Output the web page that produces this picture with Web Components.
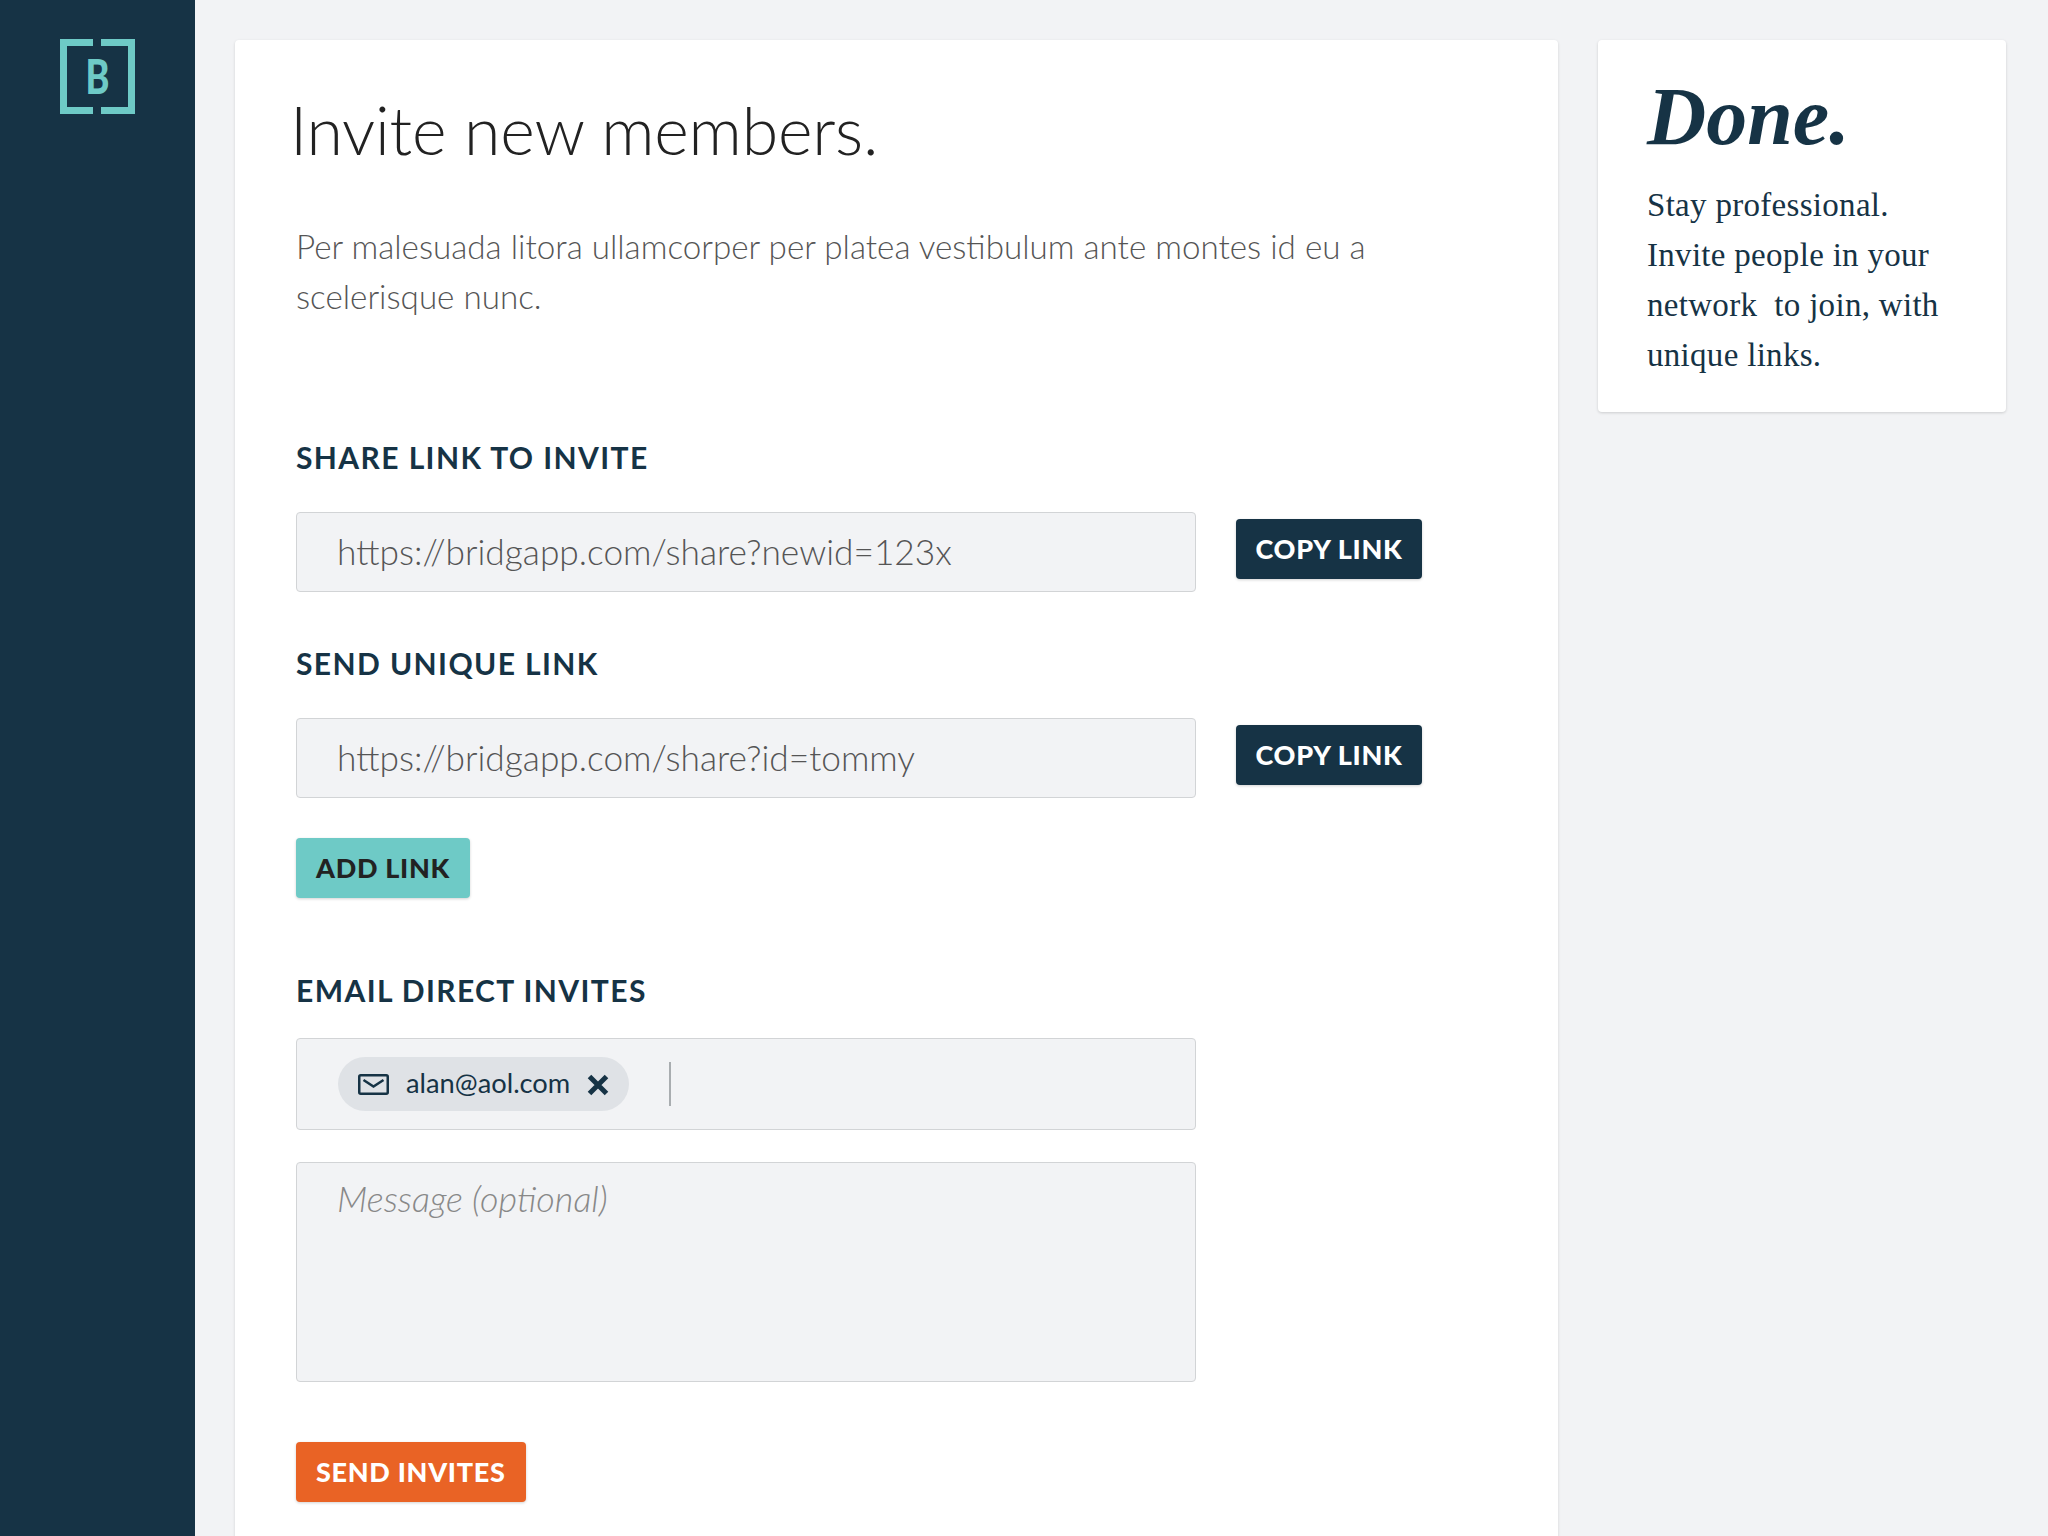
<!DOCTYPE html>
<html lang="en">
<head>
<meta charset="utf-8">
<title>Invite new members</title>
<style>
  html, body { margin: 0; height: 100%; }
  body { background: #f2f3f5; overflow: hidden; font-family: "Lato", sans-serif; }
</style>
</head>
<body>
<app-shell>
  <app-sidebar slot="nav"></app-sidebar>

  <main-card>
    <span slot="title">Invite new members.</span>
    <span slot="intro">Per malesuada litora ullamcorper per platea vestibulum ante montes id eu a scelerisque nunc.</span>

    <section-label style="--top: 0">SHARE LINK TO INVITE</section-label>
    <link-row value="https://bridgapp.com/share?newid=123x"></link-row>

    <section-label style="--top: 51px">SEND UNIQUE LINK</section-label>
    <link-row value="https://bridgapp.com/share?id=tommy"></link-row>
    <app-button kind="teal" style="margin-top: 40px">ADD LINK</app-button>

    <section-label style="--top: 72px">EMAIL DIRECT INVITES</section-label>
    <email-field></email-field>
    <message-field>Message (optional)</message-field>
    <app-button kind="orange" style="margin-top: 60px">SEND INVITES</app-button>
  </main-card>

  <tip-card slot="aside">
    <span slot="title">Done.</span>
    Stay professional.<br>Invite people in your<br>network&nbsp; to join, with<br>unique links.
  </tip-card>
</app-shell>

<script>
// small helper so every component reads the same way
function mount(el, html) {
  el.attachShadow({ mode: 'open' }).innerHTML = html;
}

class AppShell extends HTMLElement {
  connectedCallback() {
    mount(this, /* html */ `
      <style>
        :host { display: flex; height: 1536px; overflow: hidden; }
        .content { flex: 1; display: flex; align-items: flex-start; gap: 40px; padding: 40px 42px 0 40px; min-width: 0; }
      </style>
      <slot name="nav"></slot>
      <div class="content">
        <slot></slot>
        <slot name="aside"></slot>
      </div>
    `);
  }
}

class AppSidebar extends HTMLElement {
  connectedCallback() {
    mount(this, /* html */ `
      <style>
        :host { display: block; flex: none; width: 195px; height: 100%; background: #163345; padding: 39px 0 0 60px; box-sizing: border-box; }
        svg { display: block; }
      </style>
      <svg width="75" height="75" viewBox="0 0 75 75" fill="#6ecac6">
        <path d="M0 0H33V7H7V68H33V75H0Z"/>
        <path d="M41 0H75V75H41V68H68V7H41Z"/>
        <text x="37.500" y="55" text-anchor="middle" font-family="Lato, sans-serif" font-weight="900" font-size="48" textLength="24" lengthAdjust="spacingAndGlyphs">B</text>
      </svg>
    `);
  }
}

class MainCard extends HTMLElement {
  connectedCallback() {
    mount(this, /* html */ `
      <style>
        :host { display: block; flex: none; width: 1323px; height: 1600px; background: #fff; border-radius: 4px; box-shadow: 0 1px 3px rgba(0,0,0,.14); padding: 0 0 0 61px; box-sizing: border-box; }
        h1 { margin: 0; padding-top: 50px; margin-left: -6px; font: 300 66.200px/1.2 "Lato", sans-serif; color: #222; letter-spacing: -0.2px; }
        p { margin: 0; padding-top: 52px; width: 1090px; font: 300 33.200px/50px "Lato", sans-serif; color: #555; margin-bottom: 116px; }
      </style>
      <h1><slot name="title"></slot></h1>
      <p><slot name="intro"></slot></p>
      <slot></slot>
    `);
  }
}

class SectionLabel extends HTMLElement {
  connectedCallback() {
    mount(this, /* html */ `
      <style>
        :host { display: block; margin-top: var(--top, 0); font: 700 30px/40px "Lato", sans-serif; color: #163345; letter-spacing: 1.400px; margin-bottom: 35px; }
      </style>
      <slot></slot>
    `);
  }
}

class LinkRow extends HTMLElement {
  connectedCallback() {
    mount(this, /* html */ `
      <style>
        :host { display: flex; align-items: center; gap: 40px; }
        .box { width: 900px; height: 80px; box-sizing: border-box; background: #f2f3f5; border: 1px solid #d2d4d6; border-radius: 4px; padding: 0 40px 2px; display: flex; align-items: center; font: 300 35.300px "Lato", sans-serif; color: #555; }
        app-button { position: relative; top: -3px; }
      </style>
      <div class="box"></div>
      <app-button kind="navy">COPY LINK</app-button>
    `);
    this.shadowRoot.querySelector('.box').textContent = this.getAttribute('value');
  }
}

class AppButton extends HTMLElement {
  connectedCallback() {
    const kind = this.getAttribute('kind');
    const look = {
      navy: ['#163345', '#fff', '19.500px'],
      teal: ['#6ecac6', '#222', '20px'],
      orange: ['#e96325', '#fff', '20px'],
    }[kind];
    mount(this, /* html */ `
      <style>
        :host { display: inline-block; vertical-align: top; }
        button { display: block; height: 60px; padding: 0 ${look[2]} 2px; border: 0; border-radius: 4px; background: ${look[0]}; color: ${look[1]}; font: 900 27px "Lato", sans-serif; letter-spacing: 0.700px; box-shadow: 0 1px 3px rgba(0,0,0,.18); white-space: nowrap; }
      </style>
      <button><slot></slot></button>
    `);
  }
}

class EmailField extends HTMLElement {
  connectedCallback() {
    mount(this, /* html */ `
      <style>
        :host { display: flex; align-items: center; width: 900px; height: 92px; box-sizing: border-box; background: #f2f3f5; border: 1px solid #d2d4d6; border-radius: 4px; padding-left: 41px; margin-top: -7px; }
        .chip { display: flex; align-items: center; width: 291px; height: 54px; box-sizing: border-box; padding: 0 0 3px 20px; background: #dfe2e6; border-radius: 27px; color: #163345; font: 400 27.300px "Lato", sans-serif; }
        .mail { margin-right: 17px; flex: none; position: relative; top: 2px; }
        .x { margin-left: 17px; flex: none; position: relative; top: 2px; }
        .caret { width: 2px; height: 44px; background: #a9adb0; margin-left: 40px; }
      </style>
      <div class="chip">
        <svg class="mail" width="31" height="21" viewBox="0 0 31 21" fill="none" stroke="#163345" stroke-width="2.500">
          <rect x="1.250" y="1.250" width="28.500" height="18.500" rx="1.500"/>
          <path d="M5.500 6l10 6.500 10-6.500"/>
        </svg>
        <span>alan@aol.com</span>
        <svg class="x" width="22" height="22" viewBox="0 0 22 22" fill="none" stroke="#163345" stroke-width="5">
          <path d="M2.500 2.500l17 17M19.500 2.500l-17 17"/>
        </svg>
      </div>
      <div class="caret"></div>
    `);
  }
}

class MessageField extends HTMLElement {
  connectedCallback() {
    mount(this, /* html */ `
      <style>
        :host { display: block; width: 900px; height: 220px; box-sizing: border-box; margin-top: 32px; background: #f2f3f5; border: 1px solid #d2d4d6; border-radius: 4px; padding: 12px 40px; font: italic 300 36px/46px "Lato", sans-serif; color: #888; }
      </style>
      <slot></slot>
    `);
  }
}

class TipCard extends HTMLElement {
  connectedCallback() {
    mount(this, /* html */ `
      <style>
        :host { display: block; flex: 1; height: 372px; box-sizing: border-box; background: #fff; border-radius: 4px; box-shadow: 0 1px 3px rgba(0,0,0,.16); padding: 32px 0 0 49px; font: 400 33px/50px "Liberation Serif", serif; letter-spacing: 0.300px; color: #163345; }
        h2 { margin: 0 0 18px; font: italic 700 82px/1.1 "Liberation Serif", serif; letter-spacing: 0; }
      </style>
      <h2><slot name="title"></slot></h2>
      <slot></slot>
    `);
  }
}

customElements.define('app-shell', AppShell);
customElements.define('app-sidebar', AppSidebar);
customElements.define('main-card', MainCard);
customElements.define('section-label', SectionLabel);
customElements.define('link-row', LinkRow);
customElements.define('app-button', AppButton);
customElements.define('email-field', EmailField);
customElements.define('message-field', MessageField);
customElements.define('tip-card', TipCard);
</script>
</body>
</html>
